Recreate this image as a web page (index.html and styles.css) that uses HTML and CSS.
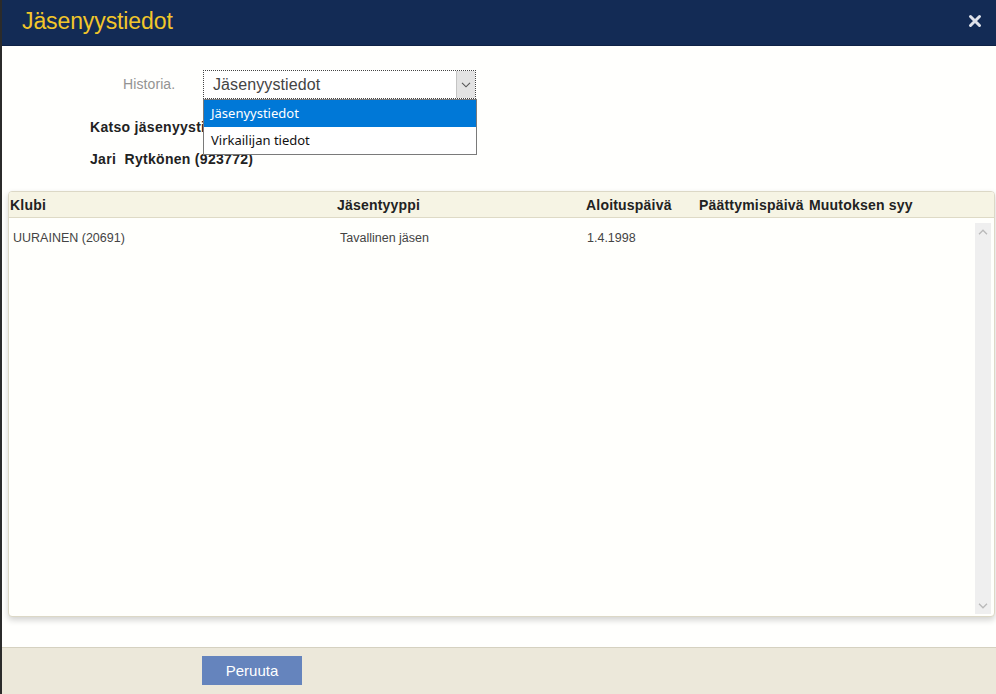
FILE: index.html
```html
<!DOCTYPE html>
<html lang="fi">
<head>
<meta charset="utf-8">
<title>Jäsenyystiedot</title>
<link rel="stylesheet" href="styles.css">
</head>
<body>
<div class="dialog">
  <header class="titlebar">
    <h1 class="title">Jäsenyystiedot</h1>
    <span class="close" aria-label="Sulje">
      <svg width="14" height="14" viewBox="0 0 14 14"><path d="M2.5 2.5 L11.5 11.5 M11.5 2.5 L2.5 11.5" stroke="#dfe2ea" stroke-width="3" stroke-linecap="round"/></svg>
    </span>
  </header>
  <main class="content">
    <div class="form">
      <div class="row select-row">
        <span class="label">Historia.</span>
        <div class="select-wrap">
          <div class="select">
            <span class="select-value">Jäsenyystiedot</span>
            <span class="select-arrow">
              <svg width="10" height="6" viewBox="0 0 10 6"><path d="M1 0.8 L5 4.8 L9 0.8" fill="none" stroke="#555" stroke-width="1.1"/></svg>
            </span>
          </div>
          <ul class="options">
            <li class="option active">Jäsenyystiedot</li>
            <li class="option">Virkailijan tiedot</li>
          </ul>
        </div>
      </div>
      <p class="bold-line">Katso jäsenyystiedot</p>
      <p class="bold-line name">Jari&nbsp; Rytkönen (923772)</p>
    </div>
    <section class="panel">
      <div class="thead">
        <span class="c1">Klubi</span>
        <span class="c2">Jäsentyyppi</span>
        <span class="c3">Aloituspäivä</span>
        <span class="c4">Päättymispäivä</span>
        <span class="c5">Muutoksen syy</span>
      </div>
      <div class="tbody">
        <div class="rows">
          <div class="trow">
            <span class="c1">UURAINEN (20691)</span>
            <span class="c2">Tavallinen jäsen</span>
            <span class="c3">1.4.1998</span>
            <span class="c4"></span>
            <span class="c5"></span>
          </div>
        </div>
        <div class="scrollbar">
          <svg width="10" height="6" viewBox="0 0 10 6"><path d="M1 5.2 L5 1.2 L9 5.2" fill="none" stroke="#b9b9b9" stroke-width="1.3"/></svg>
          <svg width="10" height="6" viewBox="0 0 10 6"><path d="M1 0.8 L5 4.8 L9 0.8" fill="none" stroke="#b9b9b9" stroke-width="1.3"/></svg>
        </div>
      </div>
    </section>
  </main>
  <footer class="footer">
    <button class="btn" type="button">Peruuta</button>
  </footer>
</div>
</body>
</html>
```
FILE: styles.css
```css
* { box-sizing: border-box; }
html, body { margin: 0; padding: 0; }
body {
  font-family: "Liberation Sans", Arial, sans-serif;
  background: #fffffd;
  color: #222;
}
.dialog {
  height: 694px;
  display: flex;
  flex-direction: column;
  border-left: 2px solid #2b2b2b;
}
.titlebar {
  height: 46px;
  flex: none;
  background: #132b55;
  display: flex;
  align-items: center;
  justify-content: space-between;
  padding: 0 14px 0 20px;
  border-bottom: 1px solid #0f2246;
}
.title {
  margin: 0;
  font-size: 23px;
  font-weight: normal;
  color: #f2c62a;
  letter-spacing: -0.1px;
  padding-bottom: 3px;
}
.close { display: flex; margin-top: -4px; }

.content {
  flex: 1;
  display: flex;
  flex-direction: column;
  padding: 24px 1px 0 6px;
  background: #fffffd;
}
.form { padding-left: 82px; }
.row { display: flex; align-items: center; }
.label {
  width: 113px;
  padding-left: 33px;
  font-size: 14px;
  color: #939393;
  margin-top: -2px;
  letter-spacing: 0.1px;
}
.select-wrap { position: relative; }
.select {
  width: 273px;
  height: 29px;
  border: 1px dotted #444;
  background: #fff;
  display: flex;
  align-items: center;
  justify-content: space-between;
}
.select-value {
  padding-left: 9px;
  font-size: 16px;
  color: #444;
  letter-spacing: 0.1px;
}
.select-arrow {
  width: 19px;
  height: 27px;
  background: #e3e3e3;
  border-left: 1px solid #c4c4c4;
  display: flex;
  align-items: center;
  justify-content: center;
}
.options {
  position: absolute;
  left: 0;
  top: 29px;
  width: 274px;
  margin: 0;
  padding: 0;
  list-style: none;
  background: #fff;
  border: 1px solid #7a7a7a;
  font-family: "Noto Sans", "Liberation Sans", sans-serif;
  font-size: 13px;
  color: #111;
  z-index: 5;
}
.option {
  height: 27px;
  line-height: 27px;
  padding-left: 7px;
}
.option.active { background: #0078d7; color: #fff; }

.bold-line {
  margin: 0;
  font-size: 14px;
  font-weight: bold;
  color: #222;
  line-height: 16px;
  letter-spacing: 0.3px;
}
.form .bold-line { margin-top: 20px; }
.form .bold-line.name { margin-top: 16px; }

.panel {
  margin-top: 24px;
  height: 426px;
  border: 1px solid #dcd8c6;
  border-radius: 4px;
  background: #fffffc;
  box-shadow: 0 3px 6px rgba(0, 0, 0, 0.18);
  display: flex;
  flex-direction: column;
  overflow: hidden;
}
.thead {
  height: 26px;
  flex: none;
  background: #f6f4e4;
  border-bottom: 1px solid #dedac6;
  display: flex;
  align-items: center;
  font-size: 14px;
  letter-spacing: 0.2px;
  font-weight: bold;
  color: #222;
}
.c1 { width: 328px; padding-left: 1px; }
.c2 { width: 249px; }
.c3 { width: 113px; }
.c4 { width: 110px; }
.c5 { flex: 1; }
.tbody {
  flex: 1;
  display: flex;
  padding: 4px 3px 2px 3px;
}
.rows { flex: 1; }
.trow {
  display: flex;
  height: 32px;
  align-items: center;
  font-size: 12.5px;
  color: #444;
  letter-spacing: 0;
}
.trow .c1 { width: 328px; }
.trow .c2 { width: 247px; }
.scrollbar {
  width: 16px;
  background: #efefef;
  display: flex;
  flex-direction: column;
  justify-content: space-between;
  align-items: center;
  padding: 6px 0 5px;
  margin-top: 1px;
}

.footer {
  height: 47px;
  flex: none;
  background: #ece8da;
  border-top: 1px solid #d5d1c0;
  padding: 8px 0 0 200px;
}
.btn {
  width: 100px;
  height: 29px;
  border: none;
  background: #6584bd;
  color: #fff;
  font-family: "Liberation Sans", Arial, sans-serif;
  font-size: 15px;
  padding: 0;
}
```
